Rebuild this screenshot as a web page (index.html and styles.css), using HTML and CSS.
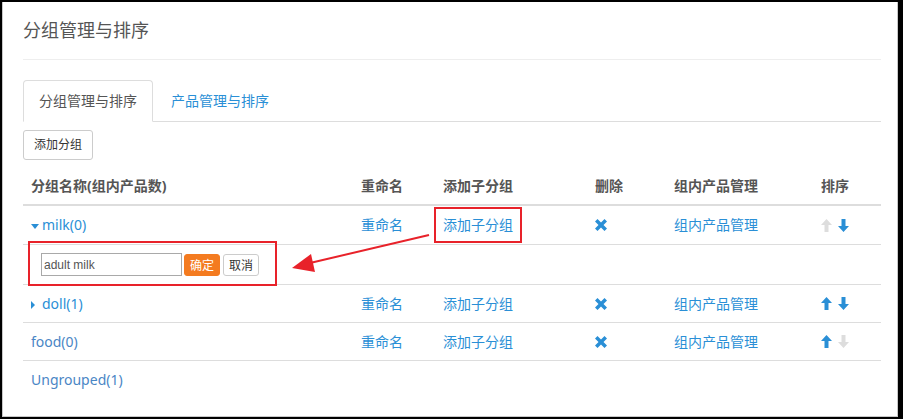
FILE: index.html
```html
<!DOCTYPE html>
<html lang="zh-CN">
<head>
	<meta charset="UTF-8">
	<title>分组管理与排序</title>
	<link rel="stylesheet" href="styles.css">
</head>
<body>
	<div class="frame">
		<div class="panel">
			<h3 class="title">分组管理与排序</h3>
			<hr class="divider">
			<ul class="tabs">
				<li class="tab active"><a href="#">分组管理与排序</a></li>
				<li class="tab"><a href="#">产品管理与排序</a></li>
			</ul>
			<button class="btn">添加分组</button>
			<table class="groups">
				<colgroup>
					<col class="c-name"><col class="c-rename"><col class="c-add"><col class="c-del"><col class="c-prod"><col class="c-sort">
				</colgroup>
				<thead>
					<tr>
						<th>分组名称(组内产品数)</th>
						<th>重命名</th>
						<th>添加子分组</th>
						<th>删除</th>
						<th>组内产品管理</th>
						<th>排序</th>
					</tr>
				</thead>
				<tbody>
					<tr class="first">
						<td><a href="#" class="group"><svg class="caret" width="8" height="5" viewBox="0 0 8 5"><polygon points="0,0 8,0 4,5"/></svg>milk(0)</a></td>
						<td><a href="#">重命名</a></td>
						<td><a href="#">添加子分组</a></td>
						<td><svg class="remove" width="12" height="12" viewBox="0 0 12 12"><polygon points="0,2.5 2.5,0 6,3.5 9.5,0 12,2.5 8.5,6 12,9.5 9.5,12 6,8.5 2.5,12 0,9.5 3.5,6"/></svg></td>
						<td><a href="#">组内产品管理</a></td>
						<td class="sort"><svg class="arrow off" width="11" height="13" viewBox="0 0 11 13"><polygon points="5.5,0 11,6 7.5,6 7.5,13 3.5,13 3.5,6 0,6"/></svg><svg class="arrow" width="11" height="13" viewBox="0 0 11 13"><polygon points="5.5,13 11,7 7.5,7 7.5,0 3.5,0 3.5,7 0,7"/></svg></td>
					</tr>
					<tr class="edit">
						<td colspan="6"><input class="name-input" type="text" value="adult milk"><button class="btn-ok">确定</button><button class="btn-cancel">取消</button></td>
					</tr>
					<tr>
						<td><a href="#" class="group"><svg class="caret" width="8" height="8" viewBox="0 0 8 8"><polygon points="0,0 4,4 0,8"/></svg>doll(1)</a></td>
						<td><a href="#">重命名</a></td>
						<td><a href="#">添加子分组</a></td>
						<td><svg class="remove" width="12" height="12" viewBox="0 0 12 12"><polygon points="0,2.5 2.5,0 6,3.5 9.5,0 12,2.5 8.5,6 12,9.5 9.5,12 6,8.5 2.5,12 0,9.5 3.5,6"/></svg></td>
						<td><a href="#">组内产品管理</a></td>
						<td class="sort"><svg class="arrow" width="11" height="13" viewBox="0 0 11 13"><polygon points="5.5,0 11,6 7.5,6 7.5,13 3.5,13 3.5,6 0,6"/></svg><svg class="arrow" width="11" height="13" viewBox="0 0 11 13"><polygon points="5.5,13 11,7 7.5,7 7.5,0 3.5,0 3.5,7 0,7"/></svg></td>
					</tr>
					<tr>
						<td><span class="plain">food(0)</span></td>
						<td><a href="#">重命名</a></td>
						<td><a href="#">添加子分组</a></td>
						<td><svg class="remove" width="12" height="12" viewBox="0 0 12 12"><polygon points="0,2.5 2.5,0 6,3.5 9.5,0 12,2.5 8.5,6 12,9.5 9.5,12 6,8.5 2.5,12 0,9.5 3.5,6"/></svg></td>
						<td><a href="#">组内产品管理</a></td>
						<td class="sort"><svg class="arrow" width="11" height="13" viewBox="0 0 11 13"><polygon points="5.5,0 11,6 7.5,6 7.5,13 3.5,13 3.5,6 0,6"/></svg><svg class="arrow off" width="11" height="13" viewBox="0 0 11 13"><polygon points="5.5,13 11,7 7.5,7 7.5,0 3.5,0 3.5,7 0,7"/></svg></td>
					</tr>
					<tr class="last">
						<td><span class="plain">Ungrouped(1)</span></td>
						<td></td><td></td><td></td><td></td><td></td>
					</tr>
				</tbody>
			</table>
		</div>
	</div>
	<!-- 标注 -->
	<svg class="marks" width="903" height="419" viewBox="0 0 903 419">
		<rect x="435" y="208" width="86" height="34" />
		<rect x="29" y="242" width="247" height="43" />
		<line x1="429" y1="235" x2="310" y2="263" />
		<polygon points="292,268 311,254 315,272" />
	</svg>
</body>
</html>
```

FILE: styles.css
```css
*{
	margin: 0;
	padding: 0;
	box-sizing: border-box;
}
body{
	position: relative;
	width: 903px;
	height: 419px;
	font-family: "Noto Sans", "Noto Sans CJK SC", sans-serif;
	font-size: 14px;
	color: #333;
	background: #fff;
}
a{
	color: #2a8fd6;
	text-decoration: none;
}
.frame{
	width: 903px;
	height: 419px;
	border: 2px solid #000;
	border-right-width: 5px;
}
.panel{
	height: 100%;
	border-left: 1px solid #c8c8c8;
	border-right: 1px solid #c8c8c8;
	border-bottom: 1px solid #c8c8c8;
	padding: 18px 16px 0 20px;
}
.title{
	font-size: 18px;
	line-height: 20px;
	font-weight: normal;
	color: #555;
}
.divider{
	border: 0;
	border-top: 1px solid #eee;
	margin: 19px 0 20px;
}
.tabs{
	display: flex;
	list-style: none;
	border-bottom: 1px solid #ddd;
}
.tab{
	margin-bottom: -1px;
	margin-right: 2px;
}
.tab a{
	display: block;
	padding: 10px 15px;
	line-height: 20px;
	border: 1px solid transparent;
	border-radius: 4px 4px 0 0;
}
.tab.active a{
	color: #555;
	background: #fff;
	border-color: #ddd #ddd transparent;
}
.btn{
	display: block;
	margin-top: 8px;
	padding: 5px 10px;
	font-family: inherit;
	font-size: 12px;
	line-height: 18px;
	color: #333;
	background: #fff;
	border: 1px solid #ccc;
	border-radius: 3px;
}
.groups{
	width: 100%;
	margin-top: 8px;
	table-layout: fixed;
	border-collapse: separate;
	border-spacing: 0;
}
.c-name{ width: 330px; }
.c-rename{ width: 82px; }
.c-add{ width: 152px; }
.c-del{ width: 79px; }
.c-prod{ width: 147px; }
.c-sort{ width: 68px; }
.groups th{
	padding: 8px;
	line-height: 20px;
	text-align: left;
	color: #555;
	font-weight: bold;
	border-bottom: 2px solid #ddd;
}
.groups td{
	padding: 8px;
	line-height: 21px;
	border-bottom: 1px solid #ddd;
	white-space: nowrap;
}
.groups .first td{
	line-height: 22px;
}
.groups .last td{
	border-bottom: 0;
}
.caret{
	fill: #2a8fd6;
	margin-right: 3px;
	vertical-align: middle;
}
.plain{
	color: #4a86c5;
}
.remove{
	fill: #2a8fd6;
	vertical-align: -1px;
}
.sort{
	font-size: 0;
}
.arrow{
	fill: #2a8fd6;
	margin-right: 6px;
	vertical-align: middle;
}
.arrow.off{
	fill: #ddd;
}
.edit td{
	padding: 8px 8px 8px 18px;
	line-height: 23px;
	font-size: 0;
}
.name-input{
	width: 141px;
	height: 23px;
	padding: 0 2px;
	font-family: "Liberation Sans", sans-serif;
	font-size: 12px;
	color: #555;
	border: 1px solid #a9a9a9;
	vertical-align: top;
}
.btn-ok,
.btn-cancel{
	width: 36px;
	height: 22px;
	margin-top: 1px;
	font-family: "Noto Sans CJK SC", sans-serif;
	font-size: 12px;
	line-height: 20px;
	border-radius: 3px;
	vertical-align: top;
}
.btn-ok{
	margin-left: 2px;
	color: #fff;
	background: #f47b20;
	border: 1px solid #f47b20;
}
.btn-cancel{
	margin-left: 3px;
	color: #333;
	background: #fff;
	border: 1px solid #ccc;
}
.marks{
	position: absolute;
	left: 0;
	top: 0;
	pointer-events: none;
}
.marks rect{
	fill: none;
	stroke: #e8222a;
	stroke-width: 2;
}
.marks line{
	stroke: #e8222a;
	stroke-width: 2;
}
.marks polygon{
	fill: #e8222a;
}
```
